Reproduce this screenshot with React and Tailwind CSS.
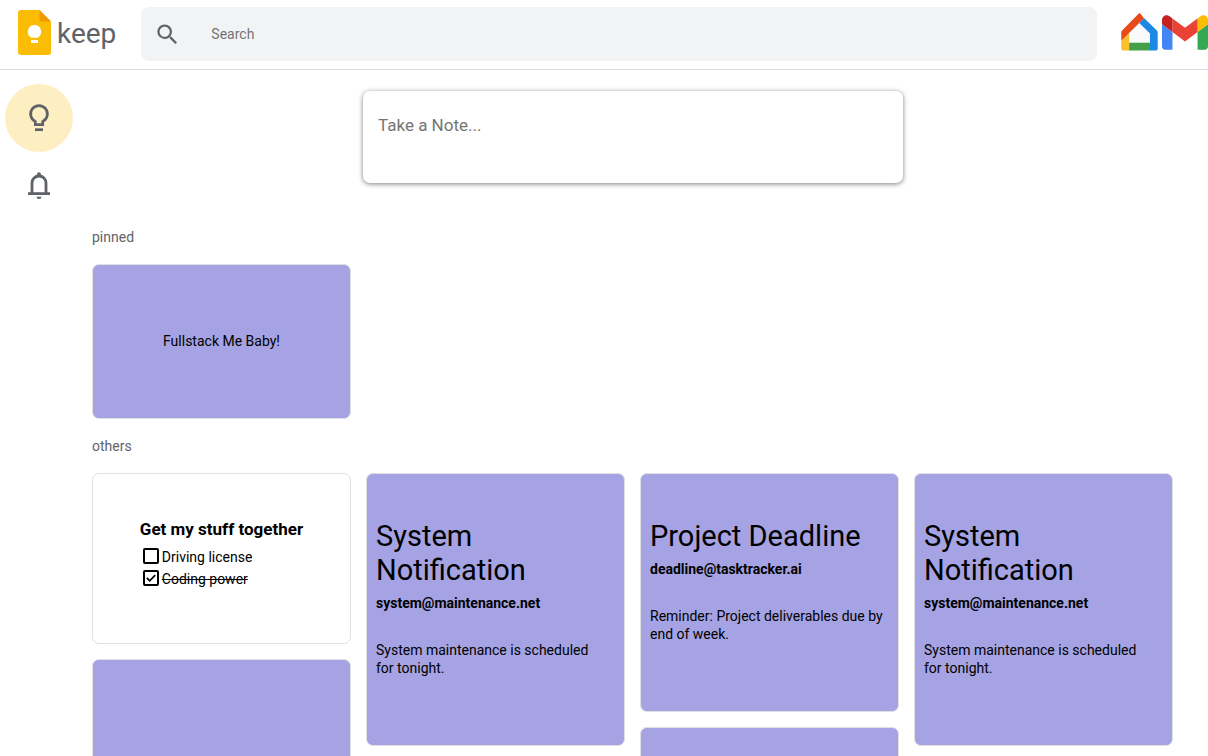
import { MdSearch } from "react-icons/md";

const maintenance = {
  kind: "mail",
  title: "System Notification",
  from: "system@maintenance.net",
  body: "System maintenance is scheduled for\u00a0tonight.",
};

const deadline = {
  kind: "mail",
  title: "Project Deadline",
  from: "deadline@tasktracker.ai",
  body: "Reminder: Project deliverables due by end of week.",
};

const columns = [
  [{ kind: "todo" }, { kind: "empty" }],
  [maintenance],
  [deadline, { kind: "empty" }],
  [maintenance],
];

const todos = [
  { id: "license", text: "Driving license", done: false },
  { id: "coding", text: "Coding power", done: true },
];

function KeepLogo() {
  return (
    <svg width="33" height="45" viewBox="0 0 33 45" aria-hidden="true">
      <path fill="#fbbc04" d="M3 0h18.500L33 11.500V42a3 3 0 0 1-3 3H3a3 3 0 0 1-3-3V3a3 3 0 0 1 3-3z" />
      <path fill="#f29900" d="M21.500 0L33 11.500H21.500z" />
      <path fill="#fff" d="M16.500 15a6.700 6.700 0 0 1 3.500 12.400v.4h-7v-.4A6.700 6.700 0 0 1 16.500 15zM13 30h7v3h-7z" />
    </svg>
  );
}

function HomeLogo() {
  return (
    <svg width="37" height="38" viewBox="0 0 37 38" aria-hidden="true">
      <path fill="#f9fafb" d="M18.500 10L29 21v9H8v-9z" />
      <path fill="#43a047" d="M8 29.700h21.500v7.800H8z" />
      <path fill="#fbc02d" d="M.3 27.700L8.200 20v17.500H2a1.700 1.700 0 0 1-1.700-1.700z" />
      <path fill="#1e88e5" d="M23 5l12.900 12.500q.8.800.8 2v16.300a1.700 1.700 0 0 1-1.700 1.700h-6v-17L18.300 10z" />
      <path fill="#e64a19" d="M.3 27.700v-8.200q0-1.200.8-2L17.300.9q1.200-1.200 2.400 0L23 5.200z" />
    </svg>
  );
}

function GmailLogo() {
  return (
    <svg width="46" height="35" viewBox="52 42 88 66" aria-hidden="true">
      <path fill="#4285f4" d="M58 108h14V74L52 59v43c0 3.320 2.690 6 6 6" />
      <path fill="#34a853" d="M120 108h14c3.320 0 6-2.690 6-6V59l-20 15" />
      <path fill="#fbbc04" d="M120 48v26l20-15v-8c0-7.420-8.470-11.650-14.400-7.200" />
      <path fill="#ea4335" d="M72 74V48l24 18 24-18v26L96 92" />
      <path fill="#c5221f" d="M52 51v8l20 15V48l-5.600-4.200c-5.940-4.450-14.400-.22-14.400 7.200" />
    </svg>
  );
}

function BulbIcon() {
  return (
    <svg width="32" height="32" viewBox="0 0 32 32" fill="none" stroke="#5f6368" strokeWidth="2.700" aria-hidden="true">
      <path d="M12.300 22.700v-3.200a8.400 8.400 0 1 1 7.400 0v3.200z" />
      <path d="M12 27.700h8" />
    </svg>
  );
}

function BellIcon() {
  return (
    <svg width="32" height="32" viewBox="0 0 32 32" fill="none" stroke="#5f6368" strokeWidth="2.800" aria-hidden="true">
      <path d="M9 23.500V13a7 7 0 0 1 14 0v10.500" />
      <path d="M5 23.600h22" />
      <path fill="#5f6368" stroke="none" d="M14 5V4.300a2 2 0 0 1 4 0V5l1 1.500h-6zM13.500 26.800h5a2.500 2.300 0 0 1-5 0z" />
    </svg>
  );
}

function Card({ className, children }) {
  return (
    <article className={`rounded-[7px] border border-[#e0e0e0] px-[9px] ${className}`}>
      {children}
    </article>
  );
}

function TodoNote() {
  return (
    <Card className="flex justify-center bg-white pt-[45px] pb-[53px]">
      <div>
        <h2 className="text-[17px] leading-5 font-bold">Get my stuff together</h2>
        <ul className="mt-[7px]">
          {todos.map((todo) => (
            <li key={todo.id} className="flex h-[22px] items-center gap-[3px] pl-[3px]">
              <span className="relative flex pb-0.5">
                <input
                  id={todo.id}
                  type="checkbox"
                  defaultChecked={todo.done}
                  className="peer size-4 appearance-none rounded-[2px] border-2 border-black"
                />
                <svg
                  viewBox="0 0 16 16"
                  fill="none"
                  stroke="#000"
                  strokeWidth="1.700"
                  aria-hidden="true"
                  className="pointer-events-none absolute inset-0 hidden size-4 peer-checked:block"
                >
                  <path d="M3.800 7.800l2.900 3 5.500-5.700" />
                </svg>
              </span>
              <label
                htmlFor={todo.id}
                className={todo.done ? "text-sm leading-[18px] line-through" : "text-sm leading-[18px]"}
              >
                {todo.text}
              </label>
            </li>
          ))}
        </ul>
      </div>
    </Card>
  );
}

function MailNote({ title, from, body }) {
  return (
    <Card className="bg-[#a5a3e3] pt-[45px] pb-[68px]">
      <h2 className="text-[29px] leading-[34px]">{title}</h2>
      <h3 className="mt-[7px] text-sm leading-[18px] font-bold">{from}</h3>
      <p className="mt-[29px] text-sm leading-[18px]">{body}</p>
    </Card>
  );
}

function Note({ note }) {
  if (note.kind === "todo") return <TodoNote />;
  if (note.kind === "mail") return <MailNote title={note.title} from={note.from} body={note.body} />;
  return <Card className="h-[155px] bg-[#a5a3e3]" />;
}

export default function App() {
  return (
    <div className="h-screen overflow-hidden bg-white font-[Roboto,sans-serif] text-sm text-black">
      <header className="flex h-[70px] items-center border-b border-[#dadce0] pb-px pl-[18px]">
        <a href="#keep" className="flex items-center gap-1.5 pb-1 text-[#5f6368]">
          <KeepLogo />
          <span className="pt-1 text-[28px] leading-8">keep</span>
        </a>
        <form role="search" className="ml-[25px] flex h-[54px] flex-1 items-center rounded-lg bg-[#f1f3f4] pl-[13px]">
          <button type="button" aria-label="Search notes" className="text-[#5f6368]">
            <MdSearch size={27} />
          </button>
          <input
            type="text"
            aria-label="Search"
            placeholder="Search"
            className="ml-[30px] min-w-0 flex-1 bg-transparent text-sm outline-none placeholder:text-[#757575]"
          />
        </form>
        <nav className="ml-6 flex items-center gap-1 pb-1">
          <a href="#home" aria-label="Home">
            <HomeLogo />
          </a>
          <a href="#mail" aria-label="Mail">
            <GmailLogo />
          </a>
        </nav>
      </header>

      <div className="flex">
        <aside className="flex w-[92px] shrink-0 flex-col pt-3.5 pl-[5px]">
          <button
            type="button"
            aria-label="Notes"
            className="flex size-[68px] items-center justify-center rounded-full bg-[#feefc3]"
          >
            <BulbIcon />
          </button>
          <button
            type="button"
            aria-label="Reminders"
            className="flex size-[68px] items-center justify-center rounded-full"
          >
            <BellIcon />
          </button>
        </aside>

        <main className="min-w-0 flex-1 pt-[21px] pr-[34px]">
          <form className="mx-auto h-[92px] max-w-[540px] rounded-[7px] bg-white px-[15px] pt-6 shadow-[0_1px_5px_rgba(0,0,0,0.5)]">
            <input
              type="text"
              aria-label="Take a note"
              placeholder="Take a Note..."
              className="block w-full bg-transparent text-[17px] leading-5 outline-none placeholder:text-[#757575]"
            />
          </form>

          <section className="mt-[45px] pr-px">
            <h1 className="leading-[18px] text-[#5f6368]">pinned</h1>
            <div className="mt-[18px] grid grid-cols-4 gap-[15px]">
              <Card className="flex h-[155px] items-center justify-center bg-[#a5a3e3] pb-0.5">
                <p className="leading-[18px]">Fullstack Me Baby!</p>
              </Card>
            </div>
          </section>

          <section className="mt-[18px] pr-px">
            <h1 className="leading-[18px] text-[#5f6368]">others</h1>
            <div className="mt-[18px] grid grid-cols-4 items-start gap-[15px]">
              {columns.map((notes, i) => (
                <div key={i} className="flex flex-col gap-[15px]">
                  {notes.map((note, j) => (
                    <Note key={j} note={note} />
                  ))}
                </div>
              ))}
            </div>
          </section>
        </main>
      </div>
    </div>
  );
}
